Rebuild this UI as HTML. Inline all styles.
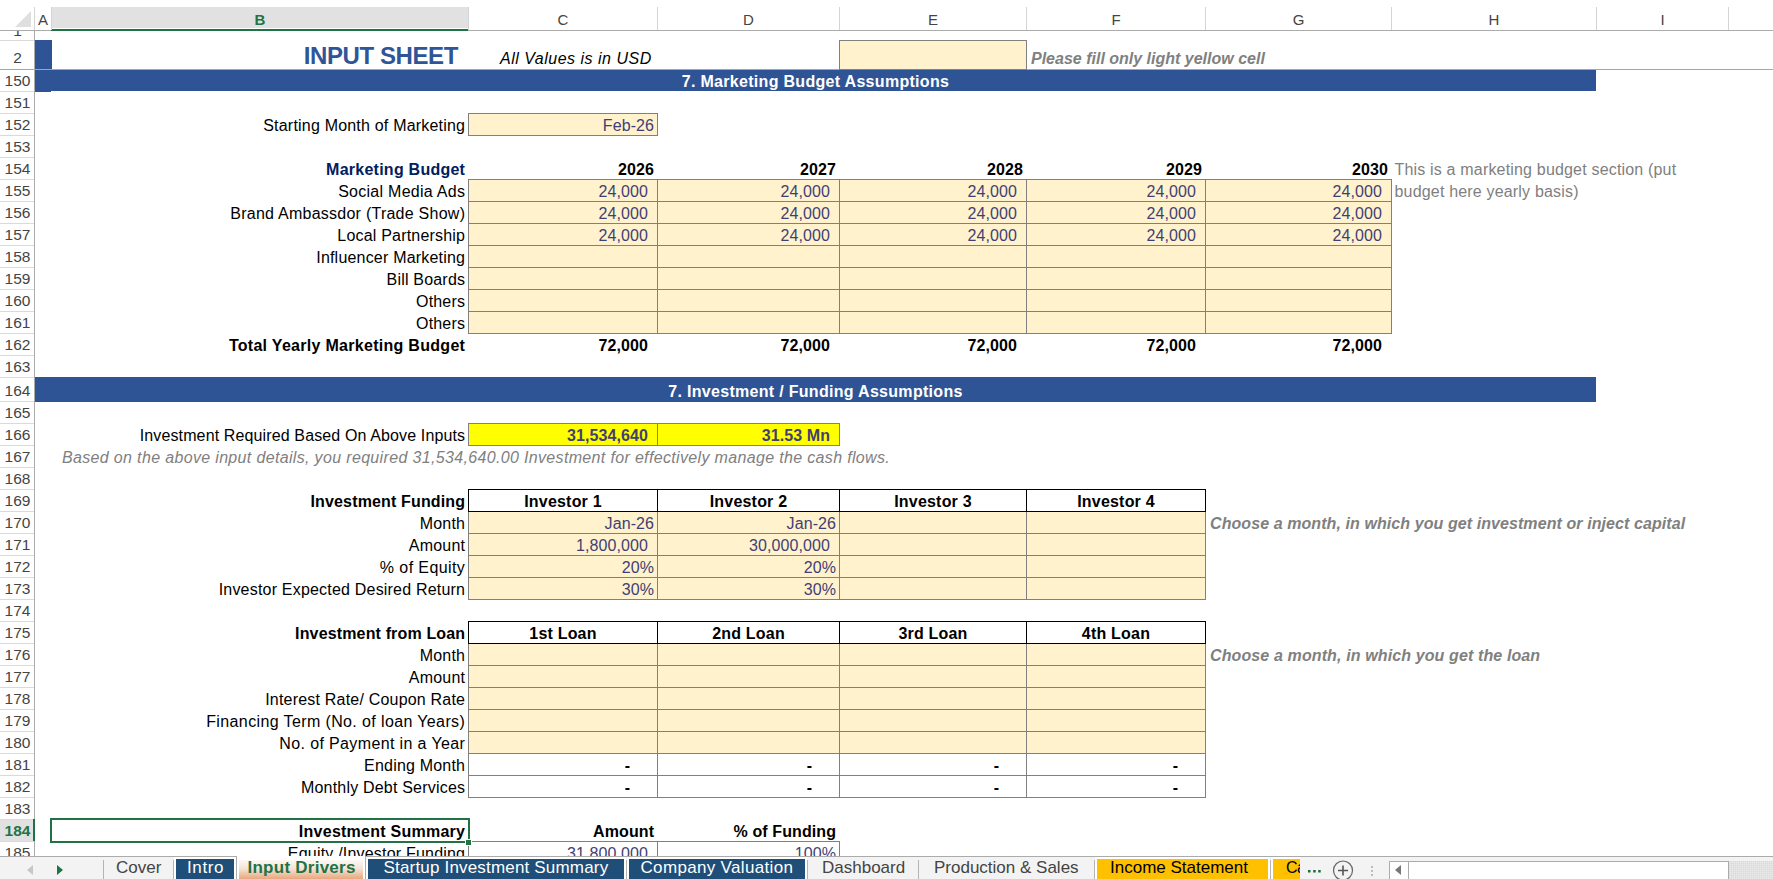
<!DOCTYPE html>
<html><head><meta charset="utf-8"><style>
html,body{margin:0;padding:0;}
body{width:1773px;height:879px;overflow:hidden;position:relative;background:#fff;font-family:'Liberation Sans', sans-serif;}
</style></head><body>
<div style="position:absolute;left:0px;top:0px;width:1773px;height:7px;background:#fff"></div>
<div style="position:absolute;left:35px;top:7px;width:1738px;height:23px;background:#fff"></div>
<div style="position:absolute;left:52px;top:7px;width:416px;height:21px;background:#E1E1E1"></div>
<div style="position:absolute;left:51px;top:29px;width:417px;height:2px;background:#217346"></div>
<div style="position:absolute;left:0px;top:30px;width:51px;height:1px;background:#ABABAB"></div>
<div style="position:absolute;left:468px;top:30px;width:1305px;height:1px;background:#ABABAB"></div>
<div style="position:absolute;left:51px;top:7px;width:1px;height:23px;background:#D4D4D4"></div>
<div style="position:absolute;left:468px;top:7px;width:1px;height:23px;background:#D4D4D4"></div>
<div style="position:absolute;left:657px;top:7px;width:1px;height:23px;background:#D4D4D4"></div>
<div style="position:absolute;left:839px;top:7px;width:1px;height:23px;background:#D4D4D4"></div>
<div style="position:absolute;left:1026px;top:7px;width:1px;height:23px;background:#D4D4D4"></div>
<div style="position:absolute;left:1205px;top:7px;width:1px;height:23px;background:#D4D4D4"></div>
<div style="position:absolute;left:1391px;top:7px;width:1px;height:23px;background:#D4D4D4"></div>
<div style="position:absolute;left:1596px;top:7px;width:1px;height:23px;background:#D4D4D4"></div>
<div style="position:absolute;left:1728px;top:7px;width:1px;height:23px;background:#D4D4D4"></div>
<div style="position:absolute;left:34px;top:7px;width:1px;height:24px;background:#D4D4D4"></div>
<svg style="position:absolute;left:15px;top:11px" width="17" height="16"><polygon points="16,0 16,16 0,16" fill="#DFDFDF"/></svg>
<div style="position:absolute;top:9.60px;height:19px;line-height:19px;white-space:nowrap;font-family:'Liberation Sans', sans-serif;font-size:15px;font-weight:normal;font-style:normal;color:#444;left:-557.0px;width:1200px;text-align:center;">A</div>
<div style="position:absolute;top:9.60px;height:19px;line-height:19px;white-space:nowrap;font-family:'Liberation Sans', sans-serif;font-size:15px;font-weight:bold;font-style:normal;color:#217346;left:-340.0px;width:1200px;text-align:center;">B</div>
<div style="position:absolute;top:9.60px;height:19px;line-height:19px;white-space:nowrap;font-family:'Liberation Sans', sans-serif;font-size:15px;font-weight:normal;font-style:normal;color:#444;left:-37.0px;width:1200px;text-align:center;">C</div>
<div style="position:absolute;top:9.60px;height:19px;line-height:19px;white-space:nowrap;font-family:'Liberation Sans', sans-serif;font-size:15px;font-weight:normal;font-style:normal;color:#444;left:148.5px;width:1200px;text-align:center;">D</div>
<div style="position:absolute;top:9.60px;height:19px;line-height:19px;white-space:nowrap;font-family:'Liberation Sans', sans-serif;font-size:15px;font-weight:normal;font-style:normal;color:#444;left:333.0px;width:1200px;text-align:center;">E</div>
<div style="position:absolute;top:9.60px;height:19px;line-height:19px;white-space:nowrap;font-family:'Liberation Sans', sans-serif;font-size:15px;font-weight:normal;font-style:normal;color:#444;left:516.0px;width:1200px;text-align:center;">F</div>
<div style="position:absolute;top:9.60px;height:19px;line-height:19px;white-space:nowrap;font-family:'Liberation Sans', sans-serif;font-size:15px;font-weight:normal;font-style:normal;color:#444;left:698.5px;width:1200px;text-align:center;">G</div>
<div style="position:absolute;top:9.60px;height:19px;line-height:19px;white-space:nowrap;font-family:'Liberation Sans', sans-serif;font-size:15px;font-weight:normal;font-style:normal;color:#444;left:894.0px;width:1200px;text-align:center;">H</div>
<div style="position:absolute;top:9.60px;height:19px;line-height:19px;white-space:nowrap;font-family:'Liberation Sans', sans-serif;font-size:15px;font-weight:normal;font-style:normal;color:#444;left:1062.5px;width:1200px;text-align:center;">I</div>
<div style="position:absolute;left:34px;top:30px;width:1px;height:826px;background:#ABABAB"></div>
<div style="position:absolute;left:0px;top:40px;width:34px;height:1px;background:#DADADA"></div>
<div style="position:absolute;left:0px;top:69px;width:34px;height:1px;background:#DADADA"></div>
<div style="position:absolute;left:0px;top:91px;width:34px;height:1px;background:#DADADA"></div>
<div style="position:absolute;left:0px;top:113px;width:34px;height:1px;background:#DADADA"></div>
<div style="position:absolute;left:0px;top:135px;width:34px;height:1px;background:#DADADA"></div>
<div style="position:absolute;left:0px;top:157px;width:34px;height:1px;background:#DADADA"></div>
<div style="position:absolute;left:0px;top:179px;width:34px;height:1px;background:#DADADA"></div>
<div style="position:absolute;left:0px;top:201px;width:34px;height:1px;background:#DADADA"></div>
<div style="position:absolute;left:0px;top:223px;width:34px;height:1px;background:#DADADA"></div>
<div style="position:absolute;left:0px;top:245px;width:34px;height:1px;background:#DADADA"></div>
<div style="position:absolute;left:0px;top:267px;width:34px;height:1px;background:#DADADA"></div>
<div style="position:absolute;left:0px;top:289px;width:34px;height:1px;background:#DADADA"></div>
<div style="position:absolute;left:0px;top:311px;width:34px;height:1px;background:#DADADA"></div>
<div style="position:absolute;left:0px;top:333px;width:34px;height:1px;background:#DADADA"></div>
<div style="position:absolute;left:0px;top:355px;width:34px;height:1px;background:#DADADA"></div>
<div style="position:absolute;left:0px;top:377px;width:34px;height:1px;background:#DADADA"></div>
<div style="position:absolute;left:0px;top:401px;width:34px;height:1px;background:#DADADA"></div>
<div style="position:absolute;left:0px;top:423px;width:34px;height:1px;background:#DADADA"></div>
<div style="position:absolute;left:0px;top:445px;width:34px;height:1px;background:#DADADA"></div>
<div style="position:absolute;left:0px;top:467px;width:34px;height:1px;background:#DADADA"></div>
<div style="position:absolute;left:0px;top:489px;width:34px;height:1px;background:#DADADA"></div>
<div style="position:absolute;left:0px;top:511px;width:34px;height:1px;background:#DADADA"></div>
<div style="position:absolute;left:0px;top:533px;width:34px;height:1px;background:#DADADA"></div>
<div style="position:absolute;left:0px;top:555px;width:34px;height:1px;background:#DADADA"></div>
<div style="position:absolute;left:0px;top:577px;width:34px;height:1px;background:#DADADA"></div>
<div style="position:absolute;left:0px;top:599px;width:34px;height:1px;background:#DADADA"></div>
<div style="position:absolute;left:0px;top:621px;width:34px;height:1px;background:#DADADA"></div>
<div style="position:absolute;left:0px;top:643px;width:34px;height:1px;background:#DADADA"></div>
<div style="position:absolute;left:0px;top:665px;width:34px;height:1px;background:#DADADA"></div>
<div style="position:absolute;left:0px;top:687px;width:34px;height:1px;background:#DADADA"></div>
<div style="position:absolute;left:0px;top:709px;width:34px;height:1px;background:#DADADA"></div>
<div style="position:absolute;left:0px;top:731px;width:34px;height:1px;background:#DADADA"></div>
<div style="position:absolute;left:0px;top:753px;width:34px;height:1px;background:#DADADA"></div>
<div style="position:absolute;left:0px;top:775px;width:34px;height:1px;background:#DADADA"></div>
<div style="position:absolute;left:0px;top:797px;width:34px;height:1px;background:#DADADA"></div>
<div style="position:absolute;left:0px;top:819px;width:34px;height:1px;background:#DADADA"></div>
<div style="position:absolute;left:0px;top:841px;width:34px;height:1px;background:#DADADA"></div>
<div style="position:absolute;left:0px;top:863px;width:34px;height:1px;background:#DADADA"></div>
<div style="position:absolute;left:0px;top:820px;width:33px;height:21px;background:#E1E1E1"></div>
<div style="position:absolute;left:33px;top:819px;width:2px;height:22px;background:#217346"></div>
<div style="position:absolute;left:0;top:31px;width:34px;height:9px;overflow:hidden">
<div style="position:absolute;top:-9.62px;height:19.5px;line-height:19.5px;white-space:nowrap;font-family:'Liberation Sans', sans-serif;font-size:15.5px;font-weight:normal;font-style:normal;color:#444;left:-582.5px;width:1200px;text-align:center;">1</div>
</div>
<div style="position:absolute;top:48.38px;height:19.5px;line-height:19.5px;white-space:nowrap;font-family:'Liberation Sans', sans-serif;font-size:15.5px;font-weight:normal;font-style:normal;color:#444;left:-582.5px;width:1200px;text-align:center;">2</div>
<div style="position:absolute;top:71.38px;height:19.5px;line-height:19.5px;white-space:nowrap;font-family:'Liberation Sans', sans-serif;font-size:15.5px;font-weight:normal;font-style:normal;color:#444;left:-582.5px;width:1200px;text-align:center;">150</div>
<div style="position:absolute;top:93.38px;height:19.5px;line-height:19.5px;white-space:nowrap;font-family:'Liberation Sans', sans-serif;font-size:15.5px;font-weight:normal;font-style:normal;color:#444;left:-582.5px;width:1200px;text-align:center;">151</div>
<div style="position:absolute;top:115.38px;height:19.5px;line-height:19.5px;white-space:nowrap;font-family:'Liberation Sans', sans-serif;font-size:15.5px;font-weight:normal;font-style:normal;color:#444;left:-582.5px;width:1200px;text-align:center;">152</div>
<div style="position:absolute;top:137.38px;height:19.5px;line-height:19.5px;white-space:nowrap;font-family:'Liberation Sans', sans-serif;font-size:15.5px;font-weight:normal;font-style:normal;color:#444;left:-582.5px;width:1200px;text-align:center;">153</div>
<div style="position:absolute;top:159.38px;height:19.5px;line-height:19.5px;white-space:nowrap;font-family:'Liberation Sans', sans-serif;font-size:15.5px;font-weight:normal;font-style:normal;color:#444;left:-582.5px;width:1200px;text-align:center;">154</div>
<div style="position:absolute;top:181.38px;height:19.5px;line-height:19.5px;white-space:nowrap;font-family:'Liberation Sans', sans-serif;font-size:15.5px;font-weight:normal;font-style:normal;color:#444;left:-582.5px;width:1200px;text-align:center;">155</div>
<div style="position:absolute;top:203.38px;height:19.5px;line-height:19.5px;white-space:nowrap;font-family:'Liberation Sans', sans-serif;font-size:15.5px;font-weight:normal;font-style:normal;color:#444;left:-582.5px;width:1200px;text-align:center;">156</div>
<div style="position:absolute;top:225.38px;height:19.5px;line-height:19.5px;white-space:nowrap;font-family:'Liberation Sans', sans-serif;font-size:15.5px;font-weight:normal;font-style:normal;color:#444;left:-582.5px;width:1200px;text-align:center;">157</div>
<div style="position:absolute;top:247.38px;height:19.5px;line-height:19.5px;white-space:nowrap;font-family:'Liberation Sans', sans-serif;font-size:15.5px;font-weight:normal;font-style:normal;color:#444;left:-582.5px;width:1200px;text-align:center;">158</div>
<div style="position:absolute;top:269.38px;height:19.5px;line-height:19.5px;white-space:nowrap;font-family:'Liberation Sans', sans-serif;font-size:15.5px;font-weight:normal;font-style:normal;color:#444;left:-582.5px;width:1200px;text-align:center;">159</div>
<div style="position:absolute;top:291.38px;height:19.5px;line-height:19.5px;white-space:nowrap;font-family:'Liberation Sans', sans-serif;font-size:15.5px;font-weight:normal;font-style:normal;color:#444;left:-582.5px;width:1200px;text-align:center;">160</div>
<div style="position:absolute;top:313.38px;height:19.5px;line-height:19.5px;white-space:nowrap;font-family:'Liberation Sans', sans-serif;font-size:15.5px;font-weight:normal;font-style:normal;color:#444;left:-582.5px;width:1200px;text-align:center;">161</div>
<div style="position:absolute;top:335.38px;height:19.5px;line-height:19.5px;white-space:nowrap;font-family:'Liberation Sans', sans-serif;font-size:15.5px;font-weight:normal;font-style:normal;color:#444;left:-582.5px;width:1200px;text-align:center;">162</div>
<div style="position:absolute;top:357.38px;height:19.5px;line-height:19.5px;white-space:nowrap;font-family:'Liberation Sans', sans-serif;font-size:15.5px;font-weight:normal;font-style:normal;color:#444;left:-582.5px;width:1200px;text-align:center;">163</div>
<div style="position:absolute;top:381.38px;height:19.5px;line-height:19.5px;white-space:nowrap;font-family:'Liberation Sans', sans-serif;font-size:15.5px;font-weight:normal;font-style:normal;color:#444;left:-582.5px;width:1200px;text-align:center;">164</div>
<div style="position:absolute;top:403.38px;height:19.5px;line-height:19.5px;white-space:nowrap;font-family:'Liberation Sans', sans-serif;font-size:15.5px;font-weight:normal;font-style:normal;color:#444;left:-582.5px;width:1200px;text-align:center;">165</div>
<div style="position:absolute;top:425.38px;height:19.5px;line-height:19.5px;white-space:nowrap;font-family:'Liberation Sans', sans-serif;font-size:15.5px;font-weight:normal;font-style:normal;color:#444;left:-582.5px;width:1200px;text-align:center;">166</div>
<div style="position:absolute;top:447.38px;height:19.5px;line-height:19.5px;white-space:nowrap;font-family:'Liberation Sans', sans-serif;font-size:15.5px;font-weight:normal;font-style:normal;color:#444;left:-582.5px;width:1200px;text-align:center;">167</div>
<div style="position:absolute;top:469.38px;height:19.5px;line-height:19.5px;white-space:nowrap;font-family:'Liberation Sans', sans-serif;font-size:15.5px;font-weight:normal;font-style:normal;color:#444;left:-582.5px;width:1200px;text-align:center;">168</div>
<div style="position:absolute;top:491.38px;height:19.5px;line-height:19.5px;white-space:nowrap;font-family:'Liberation Sans', sans-serif;font-size:15.5px;font-weight:normal;font-style:normal;color:#444;left:-582.5px;width:1200px;text-align:center;">169</div>
<div style="position:absolute;top:513.38px;height:19.5px;line-height:19.5px;white-space:nowrap;font-family:'Liberation Sans', sans-serif;font-size:15.5px;font-weight:normal;font-style:normal;color:#444;left:-582.5px;width:1200px;text-align:center;">170</div>
<div style="position:absolute;top:535.38px;height:19.5px;line-height:19.5px;white-space:nowrap;font-family:'Liberation Sans', sans-serif;font-size:15.5px;font-weight:normal;font-style:normal;color:#444;left:-582.5px;width:1200px;text-align:center;">171</div>
<div style="position:absolute;top:557.38px;height:19.5px;line-height:19.5px;white-space:nowrap;font-family:'Liberation Sans', sans-serif;font-size:15.5px;font-weight:normal;font-style:normal;color:#444;left:-582.5px;width:1200px;text-align:center;">172</div>
<div style="position:absolute;top:579.38px;height:19.5px;line-height:19.5px;white-space:nowrap;font-family:'Liberation Sans', sans-serif;font-size:15.5px;font-weight:normal;font-style:normal;color:#444;left:-582.5px;width:1200px;text-align:center;">173</div>
<div style="position:absolute;top:601.38px;height:19.5px;line-height:19.5px;white-space:nowrap;font-family:'Liberation Sans', sans-serif;font-size:15.5px;font-weight:normal;font-style:normal;color:#444;left:-582.5px;width:1200px;text-align:center;">174</div>
<div style="position:absolute;top:623.38px;height:19.5px;line-height:19.5px;white-space:nowrap;font-family:'Liberation Sans', sans-serif;font-size:15.5px;font-weight:normal;font-style:normal;color:#444;left:-582.5px;width:1200px;text-align:center;">175</div>
<div style="position:absolute;top:645.38px;height:19.5px;line-height:19.5px;white-space:nowrap;font-family:'Liberation Sans', sans-serif;font-size:15.5px;font-weight:normal;font-style:normal;color:#444;left:-582.5px;width:1200px;text-align:center;">176</div>
<div style="position:absolute;top:667.38px;height:19.5px;line-height:19.5px;white-space:nowrap;font-family:'Liberation Sans', sans-serif;font-size:15.5px;font-weight:normal;font-style:normal;color:#444;left:-582.5px;width:1200px;text-align:center;">177</div>
<div style="position:absolute;top:689.38px;height:19.5px;line-height:19.5px;white-space:nowrap;font-family:'Liberation Sans', sans-serif;font-size:15.5px;font-weight:normal;font-style:normal;color:#444;left:-582.5px;width:1200px;text-align:center;">178</div>
<div style="position:absolute;top:711.38px;height:19.5px;line-height:19.5px;white-space:nowrap;font-family:'Liberation Sans', sans-serif;font-size:15.5px;font-weight:normal;font-style:normal;color:#444;left:-582.5px;width:1200px;text-align:center;">179</div>
<div style="position:absolute;top:733.38px;height:19.5px;line-height:19.5px;white-space:nowrap;font-family:'Liberation Sans', sans-serif;font-size:15.5px;font-weight:normal;font-style:normal;color:#444;left:-582.5px;width:1200px;text-align:center;">180</div>
<div style="position:absolute;top:755.38px;height:19.5px;line-height:19.5px;white-space:nowrap;font-family:'Liberation Sans', sans-serif;font-size:15.5px;font-weight:normal;font-style:normal;color:#444;left:-582.5px;width:1200px;text-align:center;">181</div>
<div style="position:absolute;top:777.38px;height:19.5px;line-height:19.5px;white-space:nowrap;font-family:'Liberation Sans', sans-serif;font-size:15.5px;font-weight:normal;font-style:normal;color:#444;left:-582.5px;width:1200px;text-align:center;">182</div>
<div style="position:absolute;top:799.38px;height:19.5px;line-height:19.5px;white-space:nowrap;font-family:'Liberation Sans', sans-serif;font-size:15.5px;font-weight:normal;font-style:normal;color:#444;left:-582.5px;width:1200px;text-align:center;">183</div>
<div style="position:absolute;top:821.38px;height:19.5px;line-height:19.5px;white-space:nowrap;font-family:'Liberation Sans', sans-serif;font-size:15.5px;font-weight:bold;font-style:normal;color:#217346;left:-582.5px;width:1200px;text-align:center;">184</div>
<div style="position:absolute;top:843.38px;height:19.5px;line-height:19.5px;white-space:nowrap;font-family:'Liberation Sans', sans-serif;font-size:15.5px;font-weight:normal;font-style:normal;color:#444;left:-582.5px;width:1200px;text-align:center;">185</div>
<div style="position:absolute;left:35px;top:69px;width:1738px;height:1px;background:#A6A6A6"></div>
<div style="position:absolute;left:0px;top:69px;width:34px;height:1px;background:#A6A6A6"></div>
<div style="position:absolute;left:35px;top:40px;width:17px;height:29px;background:#2F5496"></div>
<div style="position:absolute;top:41.68px;height:28px;line-height:28px;white-space:nowrap;font-family:'Liberation Sans', sans-serif;font-size:24px;font-weight:bold;font-style:normal;color:#2F5597;letter-spacing:-0.4px;right:1315px;">INPUT SHEET</div>
<div style="position:absolute;top:49.46px;height:20px;line-height:20px;white-space:nowrap;font-family:'Liberation Sans', sans-serif;font-size:16px;font-weight:normal;font-style:italic;color:#000;letter-spacing:0.5px;left:500px;">All Values is in USD</div>
<div style="position:absolute;left:839px;top:40px;width:188px;height:30px;background:#FFF2CC;border:1px solid #808080;box-sizing:border-box"></div>
<div style="position:absolute;top:49.46px;height:20px;line-height:20px;white-space:nowrap;font-family:'Liberation Sans', sans-serif;font-size:16px;font-weight:bold;font-style:italic;color:#808080;left:1031px;">Please fill only light yellow cell</div>
<div style="position:absolute;left:35px;top:70px;width:1561px;height:21px;background:#2F5496"></div>
<div style="position:absolute;left:35px;top:91px;width:16px;height:1px;background:#2F5496"></div>
<div style="position:absolute;top:71.96px;height:20px;line-height:20px;white-space:nowrap;font-family:'Liberation Sans', sans-serif;font-size:16px;font-weight:bold;font-style:normal;color:#fff;letter-spacing:0.3px;left:215.5px;width:1200px;text-align:center;">7. Marketing Budget Assumptions</div>
<div style="position:absolute;left:35px;top:377px;width:1561px;height:25px;background:#2F5496"></div>
<div style="position:absolute;top:381.96px;height:20px;line-height:20px;white-space:nowrap;font-family:'Liberation Sans', sans-serif;font-size:16px;font-weight:bold;font-style:normal;color:#fff;letter-spacing:0.3px;left:215.5px;width:1200px;text-align:center;">7. Investment / Funding Assumptions</div>
<div style="position:absolute;top:116.46px;height:20px;line-height:20px;white-space:nowrap;font-family:'Liberation Sans', sans-serif;font-size:16px;font-weight:normal;font-style:normal;color:#000;letter-spacing:0.2px;right:1307.8px;">Starting Month of Marketing</div>
<div style="position:absolute;left:468px;top:113px;width:190px;height:23px;background:#FFF2CC"></div>
<div style="position:absolute;left:468px;top:113px;width:190px;height:1px;background:#808080"></div>
<div style="position:absolute;left:468px;top:135px;width:190px;height:1px;background:#808080"></div>
<div style="position:absolute;left:468px;top:113px;width:1px;height:23px;background:#808080"></div>
<div style="position:absolute;left:657px;top:113px;width:1px;height:23px;background:#808080"></div>
<div style="position:absolute;top:116.46px;height:20px;line-height:20px;white-space:nowrap;font-family:'Liberation Sans', sans-serif;font-size:16px;font-weight:normal;font-style:normal;color:#3F3F76;letter-spacing:0.1px;right:1118.9px;">Feb-26</div>
<div style="position:absolute;top:160.46px;height:20px;line-height:20px;white-space:nowrap;font-family:'Liberation Sans', sans-serif;font-size:16px;font-weight:bold;font-style:normal;color:#002060;letter-spacing:0.25px;right:1307.8px;">Marketing Budget</div>
<div style="position:absolute;top:160.46px;height:20px;line-height:20px;white-space:nowrap;font-family:'Liberation Sans', sans-serif;font-size:16px;font-weight:bold;font-style:normal;color:#000;letter-spacing:0.1px;right:1118.9px;">2026</div>
<div style="position:absolute;top:160.46px;height:20px;line-height:20px;white-space:nowrap;font-family:'Liberation Sans', sans-serif;font-size:16px;font-weight:bold;font-style:normal;color:#000;letter-spacing:0.1px;right:936.9px;">2027</div>
<div style="position:absolute;top:160.46px;height:20px;line-height:20px;white-space:nowrap;font-family:'Liberation Sans', sans-serif;font-size:16px;font-weight:bold;font-style:normal;color:#000;letter-spacing:0.1px;right:749.9px;">2028</div>
<div style="position:absolute;top:160.46px;height:20px;line-height:20px;white-space:nowrap;font-family:'Liberation Sans', sans-serif;font-size:16px;font-weight:bold;font-style:normal;color:#000;letter-spacing:0.1px;right:570.9000000000001px;">2029</div>
<div style="position:absolute;top:160.46px;height:20px;line-height:20px;white-space:nowrap;font-family:'Liberation Sans', sans-serif;font-size:16px;font-weight:bold;font-style:normal;color:#000;letter-spacing:0.1px;right:384.9000000000001px;">2030</div>
<div style="position:absolute;top:182.46px;height:20px;line-height:20px;white-space:nowrap;font-family:'Liberation Sans', sans-serif;font-size:16px;font-weight:normal;font-style:normal;color:#000;letter-spacing:0.27px;right:1307.8px;">Social Media Ads</div>
<div style="position:absolute;top:204.46px;height:20px;line-height:20px;white-space:nowrap;font-family:'Liberation Sans', sans-serif;font-size:16px;font-weight:normal;font-style:normal;color:#000;letter-spacing:0.25px;right:1307.8px;">Brand Ambassdor (Trade Show)</div>
<div style="position:absolute;top:226.46px;height:20px;line-height:20px;white-space:nowrap;font-family:'Liberation Sans', sans-serif;font-size:16px;font-weight:normal;font-style:normal;color:#000;letter-spacing:0.2px;right:1307.8px;">Local Partnership</div>
<div style="position:absolute;top:248.46px;height:20px;line-height:20px;white-space:nowrap;font-family:'Liberation Sans', sans-serif;font-size:16px;font-weight:normal;font-style:normal;color:#000;letter-spacing:0.2px;right:1307.8px;">Influencer Marketing</div>
<div style="position:absolute;top:270.46px;height:20px;line-height:20px;white-space:nowrap;font-family:'Liberation Sans', sans-serif;font-size:16px;font-weight:normal;font-style:normal;color:#000;letter-spacing:0.2px;right:1307.8px;">Bill Boards</div>
<div style="position:absolute;top:292.46px;height:20px;line-height:20px;white-space:nowrap;font-family:'Liberation Sans', sans-serif;font-size:16px;font-weight:normal;font-style:normal;color:#000;letter-spacing:0.2px;right:1307.8px;">Others</div>
<div style="position:absolute;top:314.46px;height:20px;line-height:20px;white-space:nowrap;font-family:'Liberation Sans', sans-serif;font-size:16px;font-weight:normal;font-style:normal;color:#000;letter-spacing:0.2px;right:1307.8px;">Others</div>
<div style="position:absolute;left:468px;top:179px;width:924px;height:155px;background:#FFF2CC"></div>
<div style="position:absolute;left:468px;top:179px;width:924px;height:1px;background:#808080"></div>
<div style="position:absolute;left:468px;top:201px;width:924px;height:1px;background:#808080"></div>
<div style="position:absolute;left:468px;top:223px;width:924px;height:1px;background:#808080"></div>
<div style="position:absolute;left:468px;top:245px;width:924px;height:1px;background:#808080"></div>
<div style="position:absolute;left:468px;top:267px;width:924px;height:1px;background:#808080"></div>
<div style="position:absolute;left:468px;top:289px;width:924px;height:1px;background:#808080"></div>
<div style="position:absolute;left:468px;top:311px;width:924px;height:1px;background:#808080"></div>
<div style="position:absolute;left:468px;top:333px;width:924px;height:1px;background:#808080"></div>
<div style="position:absolute;left:468px;top:179px;width:1px;height:155px;background:#808080"></div>
<div style="position:absolute;left:657px;top:179px;width:1px;height:155px;background:#808080"></div>
<div style="position:absolute;left:839px;top:179px;width:1px;height:155px;background:#808080"></div>
<div style="position:absolute;left:1026px;top:179px;width:1px;height:155px;background:#808080"></div>
<div style="position:absolute;left:1205px;top:179px;width:1px;height:155px;background:#808080"></div>
<div style="position:absolute;left:1391px;top:179px;width:1px;height:155px;background:#808080"></div>
<div style="position:absolute;top:182.46px;height:20px;line-height:20px;white-space:nowrap;font-family:'Liberation Sans', sans-serif;font-size:16px;font-weight:normal;font-style:normal;color:#3F3F76;letter-spacing:0.1px;right:1124.9px;">24,000</div>
<div style="position:absolute;top:182.46px;height:20px;line-height:20px;white-space:nowrap;font-family:'Liberation Sans', sans-serif;font-size:16px;font-weight:normal;font-style:normal;color:#3F3F76;letter-spacing:0.1px;right:942.9px;">24,000</div>
<div style="position:absolute;top:182.46px;height:20px;line-height:20px;white-space:nowrap;font-family:'Liberation Sans', sans-serif;font-size:16px;font-weight:normal;font-style:normal;color:#3F3F76;letter-spacing:0.1px;right:755.9px;">24,000</div>
<div style="position:absolute;top:182.46px;height:20px;line-height:20px;white-space:nowrap;font-family:'Liberation Sans', sans-serif;font-size:16px;font-weight:normal;font-style:normal;color:#3F3F76;letter-spacing:0.1px;right:576.9000000000001px;">24,000</div>
<div style="position:absolute;top:182.46px;height:20px;line-height:20px;white-space:nowrap;font-family:'Liberation Sans', sans-serif;font-size:16px;font-weight:normal;font-style:normal;color:#3F3F76;letter-spacing:0.1px;right:390.9000000000001px;">24,000</div>
<div style="position:absolute;top:204.46px;height:20px;line-height:20px;white-space:nowrap;font-family:'Liberation Sans', sans-serif;font-size:16px;font-weight:normal;font-style:normal;color:#3F3F76;letter-spacing:0.1px;right:1124.9px;">24,000</div>
<div style="position:absolute;top:204.46px;height:20px;line-height:20px;white-space:nowrap;font-family:'Liberation Sans', sans-serif;font-size:16px;font-weight:normal;font-style:normal;color:#3F3F76;letter-spacing:0.1px;right:942.9px;">24,000</div>
<div style="position:absolute;top:204.46px;height:20px;line-height:20px;white-space:nowrap;font-family:'Liberation Sans', sans-serif;font-size:16px;font-weight:normal;font-style:normal;color:#3F3F76;letter-spacing:0.1px;right:755.9px;">24,000</div>
<div style="position:absolute;top:204.46px;height:20px;line-height:20px;white-space:nowrap;font-family:'Liberation Sans', sans-serif;font-size:16px;font-weight:normal;font-style:normal;color:#3F3F76;letter-spacing:0.1px;right:576.9000000000001px;">24,000</div>
<div style="position:absolute;top:204.46px;height:20px;line-height:20px;white-space:nowrap;font-family:'Liberation Sans', sans-serif;font-size:16px;font-weight:normal;font-style:normal;color:#3F3F76;letter-spacing:0.1px;right:390.9000000000001px;">24,000</div>
<div style="position:absolute;top:226.46px;height:20px;line-height:20px;white-space:nowrap;font-family:'Liberation Sans', sans-serif;font-size:16px;font-weight:normal;font-style:normal;color:#3F3F76;letter-spacing:0.1px;right:1124.9px;">24,000</div>
<div style="position:absolute;top:226.46px;height:20px;line-height:20px;white-space:nowrap;font-family:'Liberation Sans', sans-serif;font-size:16px;font-weight:normal;font-style:normal;color:#3F3F76;letter-spacing:0.1px;right:942.9px;">24,000</div>
<div style="position:absolute;top:226.46px;height:20px;line-height:20px;white-space:nowrap;font-family:'Liberation Sans', sans-serif;font-size:16px;font-weight:normal;font-style:normal;color:#3F3F76;letter-spacing:0.1px;right:755.9px;">24,000</div>
<div style="position:absolute;top:226.46px;height:20px;line-height:20px;white-space:nowrap;font-family:'Liberation Sans', sans-serif;font-size:16px;font-weight:normal;font-style:normal;color:#3F3F76;letter-spacing:0.1px;right:576.9000000000001px;">24,000</div>
<div style="position:absolute;top:226.46px;height:20px;line-height:20px;white-space:nowrap;font-family:'Liberation Sans', sans-serif;font-size:16px;font-weight:normal;font-style:normal;color:#3F3F76;letter-spacing:0.1px;right:390.9000000000001px;">24,000</div>
<div style="position:absolute;top:336.46px;height:20px;line-height:20px;white-space:nowrap;font-family:'Liberation Sans', sans-serif;font-size:16px;font-weight:bold;font-style:normal;color:#000;letter-spacing:0.29px;right:1307.8px;">Total Yearly Marketing Budget</div>
<div style="position:absolute;top:336.46px;height:20px;line-height:20px;white-space:nowrap;font-family:'Liberation Sans', sans-serif;font-size:16px;font-weight:bold;font-style:normal;color:#000;letter-spacing:0.1px;right:1124.9px;">72,000</div>
<div style="position:absolute;top:336.46px;height:20px;line-height:20px;white-space:nowrap;font-family:'Liberation Sans', sans-serif;font-size:16px;font-weight:bold;font-style:normal;color:#000;letter-spacing:0.1px;right:942.9px;">72,000</div>
<div style="position:absolute;top:336.46px;height:20px;line-height:20px;white-space:nowrap;font-family:'Liberation Sans', sans-serif;font-size:16px;font-weight:bold;font-style:normal;color:#000;letter-spacing:0.1px;right:755.9px;">72,000</div>
<div style="position:absolute;top:336.46px;height:20px;line-height:20px;white-space:nowrap;font-family:'Liberation Sans', sans-serif;font-size:16px;font-weight:bold;font-style:normal;color:#000;letter-spacing:0.1px;right:576.9000000000001px;">72,000</div>
<div style="position:absolute;top:336.46px;height:20px;line-height:20px;white-space:nowrap;font-family:'Liberation Sans', sans-serif;font-size:16px;font-weight:bold;font-style:normal;color:#000;letter-spacing:0.1px;right:390.9000000000001px;">72,000</div>
<div style="position:absolute;top:160.46px;height:20px;line-height:20px;white-space:nowrap;font-family:'Liberation Sans', sans-serif;font-size:16px;font-weight:normal;font-style:normal;color:#808080;letter-spacing:0.18px;left:1394.5px;">This is a marketing budget section (put</div>
<div style="position:absolute;top:182.46px;height:20px;line-height:20px;white-space:nowrap;font-family:'Liberation Sans', sans-serif;font-size:16px;font-weight:normal;font-style:normal;color:#808080;letter-spacing:0.18px;left:1394.5px;">budget here yearly basis)</div>
<div style="position:absolute;top:426.46px;height:20px;line-height:20px;white-space:nowrap;font-family:'Liberation Sans', sans-serif;font-size:16px;font-weight:normal;font-style:normal;color:#000;letter-spacing:0.13px;right:1307.8px;">Investment Required Based On Above Inputs</div>
<div style="position:absolute;left:468px;top:423px;width:372px;height:23px;background:#FFFF00"></div>
<div style="position:absolute;left:468px;top:423px;width:372px;height:1px;background:#7F7F8F"></div>
<div style="position:absolute;left:468px;top:445px;width:372px;height:1px;background:#7F7F8F"></div>
<div style="position:absolute;left:468px;top:423px;width:1px;height:23px;background:#7F7F8F"></div>
<div style="position:absolute;left:657px;top:423px;width:1px;height:23px;background:#7F7F8F"></div>
<div style="position:absolute;left:839px;top:423px;width:1px;height:23px;background:#7F7F8F"></div>
<div style="position:absolute;top:426.46px;height:20px;line-height:20px;white-space:nowrap;font-family:'Liberation Sans', sans-serif;font-size:16px;font-weight:bold;font-style:normal;color:#3F3F76;letter-spacing:0.1px;right:1124.9px;">31,534,640</div>
<div style="position:absolute;top:426.46px;height:20px;line-height:20px;white-space:nowrap;font-family:'Liberation Sans', sans-serif;font-size:16px;font-weight:bold;font-style:normal;color:#3F3F76;letter-spacing:0.1px;right:942.9px;">31.53 Mn</div>
<div style="position:absolute;top:448.46px;height:20px;line-height:20px;white-space:nowrap;font-family:'Liberation Sans', sans-serif;font-size:16px;font-weight:normal;font-style:italic;color:#808080;letter-spacing:0.34px;left:62px;">Based on the above input details, you required 31,534,640.00 Investment for effectively manage the cash flows.</div>
<div style="position:absolute;top:492.46px;height:20px;line-height:20px;white-space:nowrap;font-family:'Liberation Sans', sans-serif;font-size:16px;font-weight:bold;font-style:normal;color:#000;letter-spacing:0.15px;right:1307.8px;">Investment Funding</div>
<div style="position:absolute;left:468px;top:489px;width:738px;height:23px;background:#fff"></div>
<div style="position:absolute;left:468px;top:489px;width:738px;height:1px;background:#000"></div>
<div style="position:absolute;left:468px;top:511px;width:738px;height:1px;background:#000"></div>
<div style="position:absolute;left:468px;top:489px;width:1px;height:23px;background:#000"></div>
<div style="position:absolute;left:657px;top:489px;width:1px;height:23px;background:#000"></div>
<div style="position:absolute;left:839px;top:489px;width:1px;height:23px;background:#000"></div>
<div style="position:absolute;left:1026px;top:489px;width:1px;height:23px;background:#000"></div>
<div style="position:absolute;left:1205px;top:489px;width:1px;height:23px;background:#000"></div>
<div style="position:absolute;top:492.46px;height:20px;line-height:20px;white-space:nowrap;font-family:'Liberation Sans', sans-serif;font-size:16px;font-weight:bold;font-style:normal;color:#000;letter-spacing:0.2px;left:-37.0px;width:1200px;text-align:center;">Investor 1</div>
<div style="position:absolute;top:492.46px;height:20px;line-height:20px;white-space:nowrap;font-family:'Liberation Sans', sans-serif;font-size:16px;font-weight:bold;font-style:normal;color:#000;letter-spacing:0.2px;left:148.5px;width:1200px;text-align:center;">Investor 2</div>
<div style="position:absolute;top:492.46px;height:20px;line-height:20px;white-space:nowrap;font-family:'Liberation Sans', sans-serif;font-size:16px;font-weight:bold;font-style:normal;color:#000;letter-spacing:0.2px;left:333.0px;width:1200px;text-align:center;">Investor 3</div>
<div style="position:absolute;top:492.46px;height:20px;line-height:20px;white-space:nowrap;font-family:'Liberation Sans', sans-serif;font-size:16px;font-weight:bold;font-style:normal;color:#000;letter-spacing:0.2px;left:516.0px;width:1200px;text-align:center;">Investor 4</div>
<div style="position:absolute;top:514.46px;height:20px;line-height:20px;white-space:nowrap;font-family:'Liberation Sans', sans-serif;font-size:16px;font-weight:normal;font-style:normal;color:#000;letter-spacing:0.2px;right:1307.8px;">Month</div>
<div style="position:absolute;top:536.46px;height:20px;line-height:20px;white-space:nowrap;font-family:'Liberation Sans', sans-serif;font-size:16px;font-weight:normal;font-style:normal;color:#000;letter-spacing:0.2px;right:1307.8px;">Amount</div>
<div style="position:absolute;top:558.46px;height:20px;line-height:20px;white-space:nowrap;font-family:'Liberation Sans', sans-serif;font-size:16px;font-weight:normal;font-style:normal;color:#000;letter-spacing:0.4px;right:1307.8px;">% of Equity</div>
<div style="position:absolute;top:580.46px;height:20px;line-height:20px;white-space:nowrap;font-family:'Liberation Sans', sans-serif;font-size:16px;font-weight:normal;font-style:normal;color:#000;letter-spacing:0.2px;right:1307.8px;">Investor Expected Desired Return</div>
<div style="position:absolute;left:468px;top:511px;width:738px;height:89px;background:#FFF2CC"></div>
<div style="position:absolute;left:468px;top:511px;width:738px;height:1px;background:#808080"></div>
<div style="position:absolute;left:468px;top:533px;width:738px;height:1px;background:#808080"></div>
<div style="position:absolute;left:468px;top:555px;width:738px;height:1px;background:#808080"></div>
<div style="position:absolute;left:468px;top:577px;width:738px;height:1px;background:#808080"></div>
<div style="position:absolute;left:468px;top:599px;width:738px;height:1px;background:#808080"></div>
<div style="position:absolute;left:468px;top:511px;width:1px;height:89px;background:#808080"></div>
<div style="position:absolute;left:657px;top:511px;width:1px;height:89px;background:#808080"></div>
<div style="position:absolute;left:839px;top:511px;width:1px;height:89px;background:#808080"></div>
<div style="position:absolute;left:1026px;top:511px;width:1px;height:89px;background:#808080"></div>
<div style="position:absolute;left:1205px;top:511px;width:1px;height:89px;background:#808080"></div>
<div style="position:absolute;left:468px;top:511px;width:738px;height:1px;background:#000"></div>
<div style="position:absolute;top:514.46px;height:20px;line-height:20px;white-space:nowrap;font-family:'Liberation Sans', sans-serif;font-size:16px;font-weight:normal;font-style:normal;color:#3F3F76;letter-spacing:0.1px;right:1118.9px;">Jan-26</div>
<div style="position:absolute;top:536.46px;height:20px;line-height:20px;white-space:nowrap;font-family:'Liberation Sans', sans-serif;font-size:16px;font-weight:normal;font-style:normal;color:#3F3F76;letter-spacing:0.1px;right:1124.9px;">1,800,000</div>
<div style="position:absolute;top:558.46px;height:20px;line-height:20px;white-space:nowrap;font-family:'Liberation Sans', sans-serif;font-size:16px;font-weight:normal;font-style:normal;color:#3F3F76;letter-spacing:0.1px;right:1118.9px;">20%</div>
<div style="position:absolute;top:580.46px;height:20px;line-height:20px;white-space:nowrap;font-family:'Liberation Sans', sans-serif;font-size:16px;font-weight:normal;font-style:normal;color:#3F3F76;letter-spacing:0.1px;right:1118.9px;">30%</div>
<div style="position:absolute;top:514.46px;height:20px;line-height:20px;white-space:nowrap;font-family:'Liberation Sans', sans-serif;font-size:16px;font-weight:normal;font-style:normal;color:#3F3F76;letter-spacing:0.1px;right:936.9px;">Jan-26</div>
<div style="position:absolute;top:536.46px;height:20px;line-height:20px;white-space:nowrap;font-family:'Liberation Sans', sans-serif;font-size:16px;font-weight:normal;font-style:normal;color:#3F3F76;letter-spacing:0.1px;right:942.9px;">30,000,000</div>
<div style="position:absolute;top:558.46px;height:20px;line-height:20px;white-space:nowrap;font-family:'Liberation Sans', sans-serif;font-size:16px;font-weight:normal;font-style:normal;color:#3F3F76;letter-spacing:0.1px;right:936.9px;">20%</div>
<div style="position:absolute;top:580.46px;height:20px;line-height:20px;white-space:nowrap;font-family:'Liberation Sans', sans-serif;font-size:16px;font-weight:normal;font-style:normal;color:#3F3F76;letter-spacing:0.1px;right:936.9px;">30%</div>
<div style="position:absolute;top:514.46px;height:20px;line-height:20px;white-space:nowrap;font-family:'Liberation Sans', sans-serif;font-size:16px;font-weight:bold;font-style:italic;color:#808080;letter-spacing:0.08px;left:1210px;">Choose a month, in which you get investment or inject capital</div>
<div style="position:absolute;top:624.46px;height:20px;line-height:20px;white-space:nowrap;font-family:'Liberation Sans', sans-serif;font-size:16px;font-weight:bold;font-style:normal;color:#000;letter-spacing:0.15px;right:1307.8px;">Investment from Loan</div>
<div style="position:absolute;left:468px;top:621px;width:738px;height:23px;background:#fff"></div>
<div style="position:absolute;left:468px;top:621px;width:738px;height:1px;background:#000"></div>
<div style="position:absolute;left:468px;top:643px;width:738px;height:1px;background:#000"></div>
<div style="position:absolute;left:468px;top:621px;width:1px;height:23px;background:#000"></div>
<div style="position:absolute;left:657px;top:621px;width:1px;height:23px;background:#000"></div>
<div style="position:absolute;left:839px;top:621px;width:1px;height:23px;background:#000"></div>
<div style="position:absolute;left:1026px;top:621px;width:1px;height:23px;background:#000"></div>
<div style="position:absolute;left:1205px;top:621px;width:1px;height:23px;background:#000"></div>
<div style="position:absolute;top:624.46px;height:20px;line-height:20px;white-space:nowrap;font-family:'Liberation Sans', sans-serif;font-size:16px;font-weight:bold;font-style:normal;color:#000;letter-spacing:0.2px;left:-37.0px;width:1200px;text-align:center;">1st Loan</div>
<div style="position:absolute;top:624.46px;height:20px;line-height:20px;white-space:nowrap;font-family:'Liberation Sans', sans-serif;font-size:16px;font-weight:bold;font-style:normal;color:#000;letter-spacing:0.2px;left:148.5px;width:1200px;text-align:center;">2nd Loan</div>
<div style="position:absolute;top:624.46px;height:20px;line-height:20px;white-space:nowrap;font-family:'Liberation Sans', sans-serif;font-size:16px;font-weight:bold;font-style:normal;color:#000;letter-spacing:0.2px;left:333.0px;width:1200px;text-align:center;">3rd Loan</div>
<div style="position:absolute;top:624.46px;height:20px;line-height:20px;white-space:nowrap;font-family:'Liberation Sans', sans-serif;font-size:16px;font-weight:bold;font-style:normal;color:#000;letter-spacing:0.2px;left:516.0px;width:1200px;text-align:center;">4th Loan</div>
<div style="position:absolute;top:646.46px;height:20px;line-height:20px;white-space:nowrap;font-family:'Liberation Sans', sans-serif;font-size:16px;font-weight:normal;font-style:normal;color:#000;letter-spacing:0.2px;right:1307.8px;">Month</div>
<div style="position:absolute;top:668.46px;height:20px;line-height:20px;white-space:nowrap;font-family:'Liberation Sans', sans-serif;font-size:16px;font-weight:normal;font-style:normal;color:#000;letter-spacing:0.2px;right:1307.8px;">Amount</div>
<div style="position:absolute;top:690.46px;height:20px;line-height:20px;white-space:nowrap;font-family:'Liberation Sans', sans-serif;font-size:16px;font-weight:normal;font-style:normal;color:#000;letter-spacing:0.2px;right:1307.8px;">Interest Rate/ Coupon Rate</div>
<div style="position:absolute;top:712.46px;height:20px;line-height:20px;white-space:nowrap;font-family:'Liberation Sans', sans-serif;font-size:16px;font-weight:normal;font-style:normal;color:#000;letter-spacing:0.38px;right:1307.8px;">Financing Term (No. of loan Years)</div>
<div style="position:absolute;top:734.46px;height:20px;line-height:20px;white-space:nowrap;font-family:'Liberation Sans', sans-serif;font-size:16px;font-weight:normal;font-style:normal;color:#000;letter-spacing:0.37px;right:1307.8px;">No. of Payment in a Year</div>
<div style="position:absolute;top:756.46px;height:20px;line-height:20px;white-space:nowrap;font-family:'Liberation Sans', sans-serif;font-size:16px;font-weight:normal;font-style:normal;color:#000;letter-spacing:0.2px;right:1307.8px;">Ending Month</div>
<div style="position:absolute;top:778.46px;height:20px;line-height:20px;white-space:nowrap;font-family:'Liberation Sans', sans-serif;font-size:16px;font-weight:normal;font-style:normal;color:#000;letter-spacing:0.2px;right:1307.8px;">Monthly Debt Services</div>
<div style="position:absolute;left:468px;top:643px;width:738px;height:111px;background:#FFF2CC"></div>
<div style="position:absolute;left:468px;top:643px;width:738px;height:1px;background:#808080"></div>
<div style="position:absolute;left:468px;top:665px;width:738px;height:1px;background:#808080"></div>
<div style="position:absolute;left:468px;top:687px;width:738px;height:1px;background:#808080"></div>
<div style="position:absolute;left:468px;top:709px;width:738px;height:1px;background:#808080"></div>
<div style="position:absolute;left:468px;top:731px;width:738px;height:1px;background:#808080"></div>
<div style="position:absolute;left:468px;top:753px;width:738px;height:1px;background:#808080"></div>
<div style="position:absolute;left:468px;top:643px;width:1px;height:111px;background:#808080"></div>
<div style="position:absolute;left:657px;top:643px;width:1px;height:111px;background:#808080"></div>
<div style="position:absolute;left:839px;top:643px;width:1px;height:111px;background:#808080"></div>
<div style="position:absolute;left:1026px;top:643px;width:1px;height:111px;background:#808080"></div>
<div style="position:absolute;left:1205px;top:643px;width:1px;height:111px;background:#808080"></div>
<div style="position:absolute;left:468px;top:643px;width:738px;height:1px;background:#000"></div>
<div style="position:absolute;left:468px;top:753px;width:738px;height:45px;background:#fff"></div>
<div style="position:absolute;left:468px;top:753px;width:738px;height:1px;background:#808080"></div>
<div style="position:absolute;left:468px;top:775px;width:738px;height:1px;background:#808080"></div>
<div style="position:absolute;left:468px;top:797px;width:738px;height:1px;background:#808080"></div>
<div style="position:absolute;left:468px;top:753px;width:1px;height:45px;background:#808080"></div>
<div style="position:absolute;left:657px;top:753px;width:1px;height:45px;background:#808080"></div>
<div style="position:absolute;left:839px;top:753px;width:1px;height:45px;background:#808080"></div>
<div style="position:absolute;left:1026px;top:753px;width:1px;height:45px;background:#808080"></div>
<div style="position:absolute;left:1205px;top:753px;width:1px;height:45px;background:#808080"></div>
<div style="position:absolute;top:756.46px;height:20px;line-height:20px;white-space:nowrap;font-family:'Liberation Sans', sans-serif;font-size:16px;font-weight:bold;font-style:normal;color:#000;letter-spacing:0.1px;right:1142.9px;">-</div>
<div style="position:absolute;top:756.46px;height:20px;line-height:20px;white-space:nowrap;font-family:'Liberation Sans', sans-serif;font-size:16px;font-weight:bold;font-style:normal;color:#000;letter-spacing:0.1px;right:960.9px;">-</div>
<div style="position:absolute;top:756.46px;height:20px;line-height:20px;white-space:nowrap;font-family:'Liberation Sans', sans-serif;font-size:16px;font-weight:bold;font-style:normal;color:#000;letter-spacing:0.1px;right:773.9px;">-</div>
<div style="position:absolute;top:756.46px;height:20px;line-height:20px;white-space:nowrap;font-family:'Liberation Sans', sans-serif;font-size:16px;font-weight:bold;font-style:normal;color:#000;letter-spacing:0.1px;right:594.9000000000001px;">-</div>
<div style="position:absolute;top:778.46px;height:20px;line-height:20px;white-space:nowrap;font-family:'Liberation Sans', sans-serif;font-size:16px;font-weight:bold;font-style:normal;color:#000;letter-spacing:0.1px;right:1142.9px;">-</div>
<div style="position:absolute;top:778.46px;height:20px;line-height:20px;white-space:nowrap;font-family:'Liberation Sans', sans-serif;font-size:16px;font-weight:bold;font-style:normal;color:#000;letter-spacing:0.1px;right:960.9px;">-</div>
<div style="position:absolute;top:778.46px;height:20px;line-height:20px;white-space:nowrap;font-family:'Liberation Sans', sans-serif;font-size:16px;font-weight:bold;font-style:normal;color:#000;letter-spacing:0.1px;right:773.9px;">-</div>
<div style="position:absolute;top:778.46px;height:20px;line-height:20px;white-space:nowrap;font-family:'Liberation Sans', sans-serif;font-size:16px;font-weight:bold;font-style:normal;color:#000;letter-spacing:0.1px;right:594.9000000000001px;">-</div>
<div style="position:absolute;top:646.46px;height:20px;line-height:20px;white-space:nowrap;font-family:'Liberation Sans', sans-serif;font-size:16px;font-weight:bold;font-style:italic;color:#808080;letter-spacing:0.12px;left:1210px;">Choose a month, in which you get the loan</div>
<div style="position:absolute;top:822.46px;height:20px;line-height:20px;white-space:nowrap;font-family:'Liberation Sans', sans-serif;font-size:16px;font-weight:bold;font-style:normal;color:#000;letter-spacing:0.25px;right:1307.8px;">Investment Summary</div>
<div style="position:absolute;top:822.46px;height:20px;line-height:20px;white-space:nowrap;font-family:'Liberation Sans', sans-serif;font-size:16px;font-weight:bold;font-style:normal;color:#000;letter-spacing:0.1px;right:1118.9px;">Amount</div>
<div style="position:absolute;top:822.46px;height:20px;line-height:20px;white-space:nowrap;font-family:'Liberation Sans', sans-serif;font-size:16px;font-weight:bold;font-style:normal;color:#000;letter-spacing:0.1px;right:936.9px;">% of Funding</div>
<div style="position:absolute;left:468px;top:841px;width:372px;height:45px;background:#fff"></div>
<div style="position:absolute;left:468px;top:841px;width:372px;height:1px;background:#808080"></div>
<div style="position:absolute;left:468px;top:863px;width:372px;height:1px;background:#808080"></div>
<div style="position:absolute;left:468px;top:885px;width:372px;height:1px;background:#808080"></div>
<div style="position:absolute;left:468px;top:841px;width:1px;height:45px;background:#808080"></div>
<div style="position:absolute;left:657px;top:841px;width:1px;height:45px;background:#808080"></div>
<div style="position:absolute;left:839px;top:841px;width:1px;height:45px;background:#808080"></div>
<div style="position:absolute;top:844.46px;height:20px;line-height:20px;white-space:nowrap;font-family:'Liberation Sans', sans-serif;font-size:16px;font-weight:normal;font-style:normal;color:#000;letter-spacing:0.2px;right:1307.8px;">Equity /Investor Funding</div>
<div style="position:absolute;top:844.46px;height:20px;line-height:20px;white-space:nowrap;font-family:'Liberation Sans', sans-serif;font-size:16px;font-weight:normal;font-style:normal;color:#3F3F76;letter-spacing:0.1px;right:1124.9px;">31,800,000</div>
<div style="position:absolute;top:844.46px;height:20px;line-height:20px;white-space:nowrap;font-family:'Liberation Sans', sans-serif;font-size:16px;font-weight:normal;font-style:normal;color:#3F3F76;letter-spacing:0.1px;right:936.9px;">100%</div>
<div style="position:absolute;left:50px;top:818px;width:420px;height:25px;border:2px solid #217346;box-sizing:border-box"></div>
<div style="position:absolute;left:465px;top:839px;width:5px;height:5px;background:#217346;border:1px solid #fff"></div>
<div style="position:absolute;left:0px;top:856px;width:1773px;height:23px;background:#F3F3F3"></div>
<div style="position:absolute;left:0px;top:856px;width:1773px;height:1px;background:#ABABAB"></div>
<svg style="position:absolute;left:26px;top:865px" width="8" height="11"><polygon points="7,0 7,10 1,5" fill="#C6C6C6"/></svg>
<svg style="position:absolute;left:56px;top:865px" width="8" height="11"><polygon points="1,0 1,10 7,5" fill="#217346"/></svg>
<div style="position:absolute;left:103px;top:860px;width:1px;height:19px;background:#B4B4B4"></div>
<div style="position:absolute;left:173px;top:860px;width:1px;height:19px;background:#B4B4B4"></div>
<div style="position:absolute;left:116px;top:856px;width:43px;height:23px;overflow:visible;white-space:nowrap;font-family:'Liberation Sans', sans-serif;font-size:17px;font-weight:normal;color:#444;line-height:23px;letter-spacing:0px">Cover</div>
<div style="position:absolute;left:174px;top:857px;width:62px;height:22px;background:#fff"></div>
<div style="position:absolute;left:176px;top:859px;width:58px;height:20px;background:#1F4E79"></div>
<div style="position:absolute;left:187px;top:856px;width:40px;height:23px;overflow:visible;white-space:nowrap;font-family:'Liberation Sans', sans-serif;font-size:17px;font-weight:normal;color:#fff;line-height:23px;letter-spacing:0.6px">Intro</div>
<div style="position:absolute;left:237px;top:856px;width:128px;height:23px;background:#fff"></div>
<div style="position:absolute;left:239px;top:860px;width:124px;height:19px;background:linear-gradient(#FDF8F5 0%, #F5E3D6 45%, #E9A77F 100%)"></div>
<div style="position:absolute;left:236px;top:856px;width:1px;height:23px;background:#ABABAB"></div>
<div style="position:absolute;left:365px;top:856px;width:1px;height:23px;background:#ABABAB"></div>
<div style="position:absolute;left:247.5px;top:856px;width:110px;height:23px;overflow:visible;white-space:nowrap;font-family:'Liberation Sans', sans-serif;font-size:17px;font-weight:bold;color:#217346;line-height:23px;letter-spacing:0.25px">Input Drivers</div>
<div style="position:absolute;left:366px;top:857px;width:260px;height:22px;background:#fff"></div>
<div style="position:absolute;left:368px;top:859px;width:256px;height:20px;background:#1F4E79"></div>
<div style="position:absolute;left:383.5px;top:856px;width:230px;height:23px;overflow:visible;white-space:nowrap;font-family:'Liberation Sans', sans-serif;font-size:17px;font-weight:normal;color:#fff;line-height:23px;letter-spacing:0.18px">Startup Investment Summary</div>
<div style="position:absolute;left:626px;top:860px;width:1px;height:19px;background:#B4B4B4"></div>
<div style="position:absolute;left:627px;top:857px;width:180px;height:22px;background:#fff"></div>
<div style="position:absolute;left:629px;top:859px;width:176px;height:20px;background:#1F4E79"></div>
<div style="position:absolute;left:640.5px;top:856px;width:160px;height:23px;overflow:visible;white-space:nowrap;font-family:'Liberation Sans', sans-serif;font-size:17px;font-weight:normal;color:#fff;line-height:23px;letter-spacing:0.33px">Company Valuation</div>
<div style="position:absolute;left:807px;top:860px;width:1px;height:19px;background:#B4B4B4"></div>
<div style="position:absolute;left:822px;top:856px;width:81px;height:23px;overflow:visible;white-space:nowrap;font-family:'Liberation Sans', sans-serif;font-size:17px;font-weight:normal;color:#444;line-height:23px;letter-spacing:0px">Dashboard</div>
<div style="position:absolute;left:918px;top:860px;width:1px;height:19px;background:#B4B4B4"></div>
<div style="position:absolute;left:934px;top:856px;width:145px;height:23px;overflow:visible;white-space:nowrap;font-family:'Liberation Sans', sans-serif;font-size:17px;font-weight:normal;color:#444;line-height:23px;letter-spacing:0px">Production &amp; Sales</div>
<div style="position:absolute;left:1094px;top:860px;width:1px;height:19px;background:#B4B4B4"></div>
<div style="position:absolute;left:1095px;top:857px;width:175px;height:22px;background:#fff"></div>
<div style="position:absolute;left:1097px;top:859px;width:171px;height:20px;background:#FFC000"></div>
<div style="position:absolute;left:1110px;top:856px;width:140px;height:23px;overflow:visible;white-space:nowrap;font-family:'Liberation Sans', sans-serif;font-size:17px;font-weight:normal;color:#000;line-height:23px;letter-spacing:0px">Income Statement</div>
<div style="position:absolute;left:1270px;top:860px;width:1px;height:19px;background:#B4B4B4"></div>
<div style="position:absolute;left:1271px;top:857px;width:29px;height:22px;background:#fff"></div>
<div style="position:absolute;left:1273px;top:859px;width:27px;height:20px;background:#FFC000"></div>
<div style="position:absolute;left:1273px;top:856px;width:27px;height:23px;overflow:hidden;white-space:nowrap;font-family:'Liberation Sans', sans-serif;font-size:16px;color:#000;line-height:23px"><span style="margin-left:13px;letter-spacing:-0.5px">Ca</span></div>
<svg style="position:absolute;left:1307px;top:869px" width="16" height="4"><rect x="1" y="1" width="2.5" height="2.5" fill="#1E6B3C"/><rect x="6.2" y="1" width="2.5" height="2.5" fill="#1E6B3C"/><rect x="11.2" y="1" width="2.5" height="2.5" fill="#1E6B3C"/></svg>
<svg style="position:absolute;left:1332px;top:860px" width="22" height="22"><circle cx="11" cy="10.5" r="9.5" fill="none" stroke="#666" stroke-width="1.2"/><path d="M6 10.5 H16 M11 5.5 V15.5" stroke="#555" stroke-width="1.6"/></svg>
<svg style="position:absolute;left:1370px;top:865px" width="4" height="12"><circle cx="2" cy="2" r="1" fill="#AAA"/><circle cx="2" cy="6" r="1" fill="#AAA"/><circle cx="2" cy="10" r="1" fill="#AAA"/></svg>
<div style="position:absolute;left:1389px;top:861px;width:384px;height:18px;background-color:#EAEAEA;background-image:linear-gradient(90deg, rgba(0,0,0,0.035) 50%, transparent 50%),linear-gradient(rgba(0,0,0,0.035) 50%, transparent 50%);background-size:2px 2px"></div>
<div style="position:absolute;left:1389px;top:861px;width:340px;height:18px;background:#fff;border-left:1px solid #ABABAB;border-top:1px solid #ABABAB;box-sizing:border-box"></div>
<div style="position:absolute;left:1408px;top:861px;width:321px;height:18px;background:#fff;border-left:1px solid #ABABAB;border-top:1px solid #ABABAB;border-right:1px solid #ABABAB;box-sizing:border-box"></div>
<svg style="position:absolute;left:1395px;top:865px" width="7" height="10"><polygon points="6,0 6,10 0,5" fill="#777"/></svg>
</body></html>
